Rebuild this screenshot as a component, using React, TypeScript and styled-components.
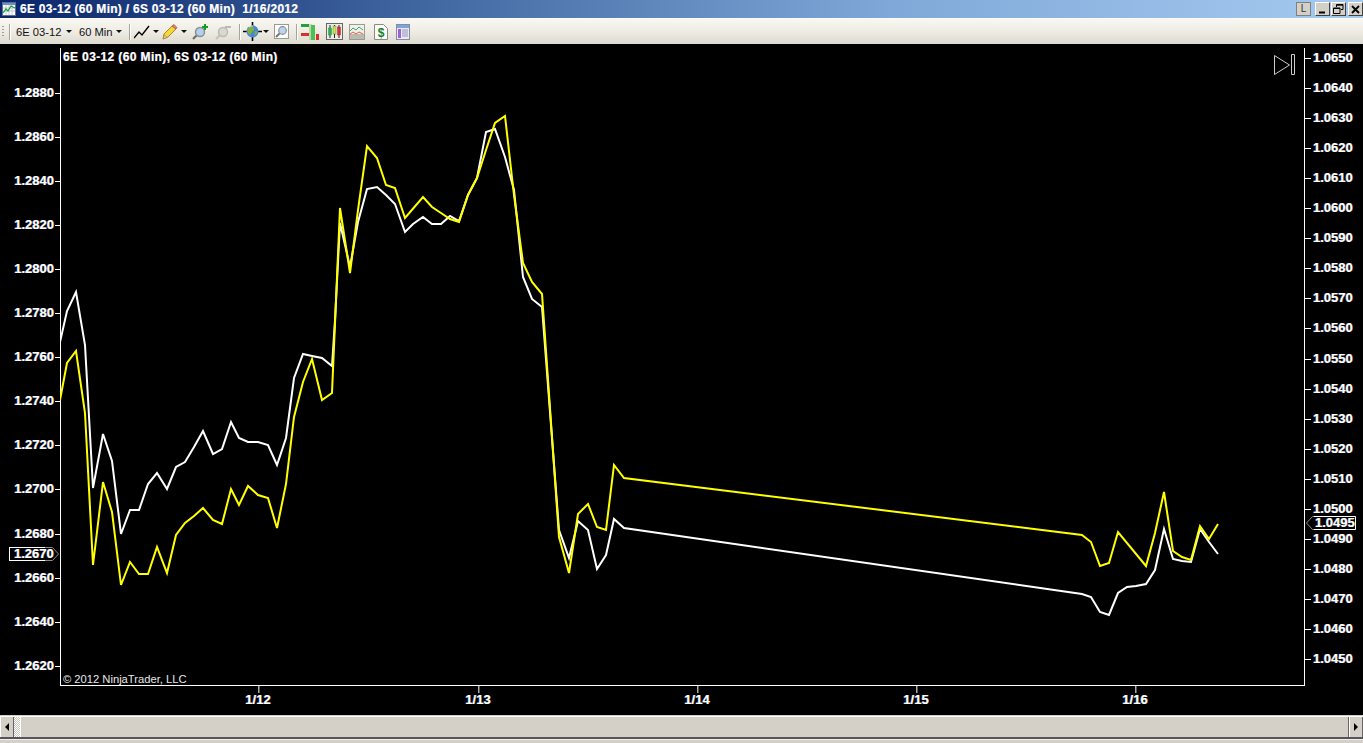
import React from 'react';
import styled, { createGlobalStyle } from 'styled-components';

const Global = createGlobalStyle`
  html, body { margin: 0; padding: 0; height: 100%; background: #d4d0c8; overflow: hidden; }
  #root { height: 100%; }
`;

const Win = styled.div`
  width: 1363px; height: 743px; display: flex; flex-direction: column;
  background: #d4d0c8; font-family: "Liberation Sans", Arial, sans-serif;
`;
const TitleBar = styled.div`
  height: 18px; flex: none; display: flex; align-items: center; gap: 4px; padding-left: 2px;
  background: linear-gradient(90deg, #0a246a 0%, #3f659f 30%, #7fa8d8 65%, #a6caf0 100%);
`;
const TitleText = styled.span`
  color: #fff; font-size: 12px; font-weight: 700; white-space: pre; letter-spacing: .28px;
  text-shadow: -.4px 0 rgba(120,180,255,.5), .4px 0 rgba(255,190,120,.4);
`;
const WinButtons = styled.div`
  margin-left: auto; display: flex; align-items: center; height: 100%; padding-top: 0;
`;
const WinBtn = styled.div<{ $gap?: number; $flat?: boolean }>`
  width: 15px; height: 14px; margin-left: ${p => p.$gap ?? 1}px; box-sizing: border-box;
  background: #d4d0c8; display: flex; align-items: center; justify-content: center;
  border: 1px solid; border-color: ${p => p.$flat ? '#808080' : '#fff #404040 #404040 #fff'};
  color: #333; line-height: 1;
`;
const LockLetter = styled.span`
  font-size: 10px; font-weight: 400;
`;
const Toolbar = styled.div`
  height: 26px; flex: none; display: flex; align-items: center; box-sizing: border-box;
  background: linear-gradient(180deg, #f8f7f2 0%, #efede5 45%, #dedbd0 100%);
  border-top: 1px solid #fbfaf6; color: #111; font-size: 11.2px;
`;
const Grip = styled.div`
  width: 2px; height: 12px; margin: 0 5px 0 2px; flex: none;
  background: repeating-linear-gradient(180deg, #a09d92 0 1px, transparent 1px 3px);
`;
const Sep = styled.div<{ $l: number }>`
  width: 1px; height: 16px; flex: none; background: #a8a598; box-shadow: 1px 0 #fff;
  margin-left: ${p => p.$l}px;
`;
const Combo = styled.span<{ $l: number; $w: number }>`
  margin-left: ${p => p.$l}px; width: ${p => p.$w}px; flex: none; white-space: nowrap;
`;
const Caret = styled.i<{ $l: number }>`
  width: 0; height: 0; flex: none; border: 3px solid transparent; border-top: 3px solid #111; border-bottom: 0;
  margin-left: ${p => p.$l}px;
`;
const Ico = styled.svg<{ $l?: number }>`
  flex: none; margin-left: ${p => p.$l ?? 0}px; display: block;
`;
const Chart = styled.div`
  flex: none; height: 671px; background: #000; display: grid; color: #fff;
  grid-template-columns: 60px 1245px 58px; grid-template-rows: 4px 638px 29px;
`;
const Axis = styled.div<{ $col: number }>`
  position: relative; grid-row: 2; grid-column: ${p => p.$col};
`;
const PriceLabel = styled.span<{ $side: 'l' | 'r' }>`
  position: absolute; height: 14px; line-height: 14px; margin-top: -7px; font-size: 13px; font-weight: 700;
  color: #fff; white-space: nowrap;
  text-shadow: -.5px 0 rgba(90,160,255,.7), .5px 0 rgba(255,160,70,.6);
  ${p => p.$side === 'l' ? 'right: 6px;' : 'left: 8px;'}
  &::after {
    content: ''; position: absolute; top: 7px; width: 5px; height: 1px; background: #fff;
    ${p => p.$side === 'l' ? 'right: -6px;' : 'left: -8px; width: 6px;'}
  }
`;
const Marker = styled.svg<{ $side: 'l' | 'r' }>`
  position: absolute; ${p => p.$side === 'l' ? 'left: 9px;' : 'left: 0;'}
`;
const MarkerText = styled.span`
  position: absolute; font-size: 13px; font-weight: 700; line-height: 14px; height: 14px; color: #fff;
  text-shadow: -.5px 0 rgba(90,160,255,.7), .5px 0 rgba(255,160,70,.6);
`;
const Plot = styled.div`
  position: relative; grid-row: 2; grid-column: 2; box-sizing: border-box;
  border-left: 1px solid #fff; border-right: 1px solid #fff; border-bottom: 1px solid #fff;
`;
const PlotSvg = styled.svg`
  position: absolute; left: -1px; top: 0; display: block; overflow: hidden;
`;
const Heading = styled.div`
  position: absolute; left: 2px; top: 2px; font-size: 12px; font-weight: 700; letter-spacing: .37px; white-space: nowrap;
  text-shadow: -.4px 0 rgba(90,160,255,.6), .4px 0 rgba(255,160,70,.5);
`;
const Copyright = styled.div`
  position: absolute; left: 2px; bottom: 0; font-size: 11.2px; line-height: 12px; color: #e8e8e8; white-space: nowrap;
`;
const DateAxis = styled.div`
  grid-column: 2; grid-row: 3; position: relative;
`;
const DateLabel = styled.span`
  position: absolute; top: 7px; transform: translateX(-50%); font-size: 13px; font-weight: 700; line-height: 14px;
  text-shadow: -.5px 0 rgba(90,160,255,.7), .5px 0 rgba(255,160,70,.6);
  &::before { content: ''; position: absolute; left: 50%; top: -7px; width: 1px; height: 7px; background: #fff; }
`;
const ScrollBar = styled.div`
  flex: none; display: flex; background: #d4d0c8; border-top: 1px solid #fff;
  border-bottom: 2px solid #555; height: 20px; margin-top: 1px;
`;
const ScrollBtn = styled.div`
  width: 14px; flex: none; display: flex; align-items: center; justify-content: center;
  box-shadow: inset -1px 0 #666, inset 1px 0 #fff;
`;
const Track = styled.div`
  width: 6px; flex: none;
  background: repeating-conic-gradient(#fff 0 25%, #c8c4bc 0 50%) 0 0 / 2px 2px;
`;
const Thumb = styled.div`
  flex: 1; box-shadow: inset 1px 0 #fff, inset -1px 0 #666;
`;
const Tri = styled.i<{ $dir: 'l' | 'r' }>`
  width: 0; height: 0; border: 4px solid transparent; border-left-width: ${p => p.$dir === 'r' ? 4 : 0}px;
  border-right-width: ${p => p.$dir === 'l' ? 4 : 0}px;
  ${p => p.$dir === 'r' ? 'border-left-color:#000;' : 'border-right-color:#000;'}
`;
const Footer = styled.div`
  flex: 1; background: #d4d0c8; border-top: 1px solid #eee;
`;

const white: number[][] = [[60,342],[67,311],[76,292],[85,345],[93,488],[103,434],[112,461],[121,534],[130,510],[139,510],[148,484],[157,473],[167,489],[176,467],[185,462],[194,447],[203,431],[213,454],[222,449],[231,422],[239,438],[248,442],[258,442],[268,445],[277,465],[286,438],[294,378],[303,354],[312,356],[322,358],[332,366],[335,320],[340,223],[350,267],[358,222],[367,189],[377,187],[386,195],[395,204],[405,232],[413,224],[423,217],[432,224],[441,224],[450,216],[459,221],[468,195],[477,178],[486,132],[495,129],[505,157],[514,190],[523,277],[532,299],[542,307],[559,530],[569,558],[578,521],[588,530],[597,569],[606,555],[614,519],[624,528],[1082,594],[1091,597],[1100,612],[1109,615],[1118,593],[1127,587],[1136,586],[1146,584],[1155,570],[1164,529],[1173,559],[1182,561],[1191,562],[1200,529],[1209,542],[1218,554]];
const yellow: number[][] = [[60,400],[67,363],[76,351],[85,413],[93,565],[103,482],[112,512],[121,585],[130,562],[139,574],[148,574],[157,547],[167,573],[176,535],[185,523],[194,516],[203,508],[213,520],[222,524],[231,489],[239,505],[248,486],[258,495],[268,498],[277,528],[286,484],[294,417],[303,382],[312,359],[322,400],[332,393],[340,208],[350,273],[358,210],[367,146],[377,158],[386,185],[395,188],[405,218],[423,197],[432,207],[441,213],[450,219],[459,222],[468,195],[477,178],[486,150],[495,123],[505,116],[514,195],[523,263],[532,282],[542,294],[559,537],[569,573],[578,514],[588,504],[597,527],[606,530],[614,465],[624,478],[1082,535],[1091,542],[1100,566],[1109,563],[1118,532],[1146,566],[1155,533],[1164,492],[1173,551],[1182,557],[1191,560],[1200,526],[1209,539],[1218,524]];
const pts = (a: number[][]) => a.map(p => p.join(',')).join(' ');

const leftPrices = Array.from({ length: 14 }, (_, i) => ({ t: (1.288 - i * 0.002).toFixed(4), y: 93 + i * 44.05 - 48 }));
const rightPrices = Array.from({ length: 21 }, (_, i) => ({ t: (1.065 - i * 0.001).toFixed(4), y: 58 + i * 30.05 - 48 }));
const dates = [['1/12', 198], ['1/13', 418], ['1/14', 637], ['1/15', 856], ['1/16', 1075]] as const;

const TitleIcon = () => (
  <Ico width="14" height="14" viewBox="0 0 14 14">
    <rect x=".5" y=".5" width="13" height="13" fill="#fff" stroke="#5a6f9a" />
    <rect x="1" y="1" width="12" height="2" fill="#6d8fc5" />
    <path d="M4 3v10M7 3v10M10 3v10M1 6h12M1 9h12" stroke="#c0c8d8" />
    <path d="M1 11l3-4 2 2 3-5 4 2" fill="none" stroke="#18a030" strokeWidth="1.2" />
  </Ico>
);

export default function App() {
  return (
    <Win>
      <Global />
      <TitleBar>
        <TitleIcon />
        <TitleText>6E 03-12 (60 Min) / 6S 03-12 (60 Min)  1/16/2012</TitleText>
        <WinButtons>
          <WinBtn $flat><LockLetter>L</LockLetter></WinBtn>
          <WinBtn $gap={4}>
            <svg width="9" height="9" viewBox="0 0 9 9"><path d="M1 7.5h6" stroke="#000" strokeWidth="2" /></svg>
          </WinBtn>
          <WinBtn $gap={1}>
            <svg width="11" height="10" viewBox="0 0 11 10"><path d="M3.5 3V.5h6.5v5H8M.5 4h6.5v5.500H.500z M.5 4.500h6.500M3.500 1.200h6.500" fill="none" stroke="#000" /></svg>
          </WinBtn>
          <WinBtn $gap={2}>
            <svg width="9" height="9" viewBox="0 0 9 9"><path d="M1 1l7 7M8 1L1 8" stroke="#000" strokeWidth="1.8" /></svg>
          </WinBtn>
        </WinButtons>
      </TitleBar>

      <Toolbar>
        <Grip />
        <Sep $l={0} />
        <Combo $l={6} $w={50}>6E 03-12</Combo>
        <Caret $l={0} />
        <Combo $l={7} $w={37}>60 Min</Combo>
        <Caret $l={0} />
        <Sep $l={7} />
        <Ico $l={4} width="16" height="14" viewBox="0 0 16 14">
          <path d="M0 13l5-6 3 3 7-9" fill="none" stroke="#000" strokeWidth="1.4" />
        </Ico>
        <Caret $l={3} />
        <Ico $l={3} width="16" height="16" viewBox="0 0 16 16">
          <path d="M1 15l1-5 8-8 4 3-8 8z" fill="#f4d73c" stroke="#a88a20" />
          <path d="M1 15l1.200-4 3 2.500z" fill="#e8c8a0" stroke="#887050" strokeWidth=".5" />
          <path d="M10 2l2-1.500 3 3-1 1.500z" fill="#e88a70" stroke="#a05040" strokeWidth=".7" />
        </Ico>
        <Caret $l={3} />
        <Ico $l={5} width="17" height="16" viewBox="0 0 17 16">
          <path d="M1 15l4-4" stroke="#6d6d6d" strokeWidth="2.200" />
          <circle cx="8" cy="8" r="4.500" fill="#b4cfee" stroke="#8a8f98" strokeWidth="1.500" />
          <path d="M13 0v6M10 3h6" stroke="#12a020" strokeWidth="2" />
        </Ico>
        <Ico $l={6} width="17" height="16" viewBox="0 0 17 16">
          <path d="M1 15l4-4" stroke="#c4c2bc" strokeWidth="2.200" />
          <circle cx="8" cy="8" r="4.500" fill="#dad8d2" stroke="#bcbab4" strokeWidth="1.500" />
          <path d="M10 3h6" stroke="#bcbab4" strokeWidth="2" />
        </Ico>
        <Sep $l={7} />
        <Ico $l={3} width="19" height="19" viewBox="0 0 19 19">
          <path d="M9.500 0v19M0 9.500h19" stroke="#000" strokeWidth="1.600" />
          <circle cx="9.500" cy="9.500" r="6" fill="#4a86d6" />
          <path d="M5 6c3-2 5-1 6 0s-1 3-2 4-1 4-3 2-2-4-1-6zM12 9c1 0 2 0 2.500 1-.5 2-2 3.500-3 3.500z" fill="#7fb23a" />
          <path d="M6 5c2-1 3-1 4-1" stroke="#dff0ff" fill="none" />
        </Ico>
        <Caret $l={1} />
        <Ico $l={5} width="15" height="15" viewBox="0 0 15 15">
          <rect x=".5" y=".5" width="14" height="14" fill="#fdfdfb" stroke="#9c9a94" />
          <circle cx="8.500" cy="6.500" r="3.800" fill="#bcd3ee" stroke="#8a9098" strokeWidth="1.200" />
          <path d="M2 13l3.500-3.500" stroke="#707070" strokeWidth="1.800" />
        </Ico>
        <Sep $l={7} />
        <Ico $l={4} width="18" height="17" viewBox="0 0 18 17">
          <path d="M0 1h8v3H0z" fill="#25a03c" /><path d="M0 10h8v3H0z" fill="#d8302c" />
          <path d="M8 1h3v3H8zM8 10h2v3H8z" fill="#d6d2c0" />
          <rect x="10" y="2" width="4" height="15" fill="#4cc050" />
          <rect x="8" y="4" width="2" height="13" fill="#b8d8b0" />
          <rect x="15" y="11" width="3" height="6" fill="#d8302c" />
        </Ico>
        <Ico $l={7} width="17" height="17" viewBox="0 0 17 17">
          <rect x=".5" y=".5" width="16" height="16" fill="#eeece4" stroke="#666" />
          <path d="M4 2v13M8.500 2v13M13 2v13" stroke="#222" />
          <rect x="2.500" y="5" width="3" height="7" fill="#30b040" stroke="#185" strokeWidth=".4" />
          <rect x="7" y="3" width="3" height="8" fill="#d8e050" stroke="#185" strokeWidth=".4" />
          <rect x="11.500" y="4" width="3" height="8" fill="#d83030" stroke="#822" strokeWidth=".4" />
        </Ico>
        <Ico $l={6} width="16" height="16" viewBox="0 0 16 16">
          <rect x=".5" y=".5" width="15" height="15" fill="#f2f0ea" stroke="#9c9a94" />
          <rect x="1" y="10" width="14" height="5" fill="#bdbab0" />
          <path d="M1 7l3-3 3 2 3-3 4 3" fill="none" stroke="#38a868" />
          <path d="M1 10l3-2 3 2 3-2 4 2" fill="none" stroke="#d86050" />
        </Ico>
        <Ico $l={9} width="14" height="16" viewBox="0 0 14 16">
          <path d="M.5.5h9l4 4v11H.500z" fill="#fcfcf8" stroke="#8c8a84" />
          <text x="7" y="13" textAnchor="middle" fontSize="12" fontWeight="700" fontFamily="Liberation Sans" fill="#138030">$</text>
        </Ico>
        <Ico $l={8} width="14" height="16" viewBox="0 0 14 16">
          <rect x=".5" y=".5" width="13" height="15" fill="#e8e8f6" stroke="#8a88a8" />
          <rect x="1" y="1" width="12" height="3" fill="#7aa6d8" />
          <rect x="2" y="5" width="3" height="9" fill="#a060d8" />
          <path d="M6 6h6M6 8h6M6 10h6M6 12h6" stroke="#9898b0" />
        </Ico>
      </Toolbar>

      <Chart>
        <Axis $col={1}>
          {leftPrices.map(p => (
            <PriceLabel key={p.t} $side="l" style={{ top: p.y }}>{p.t}</PriceLabel>
          ))}
          <Marker $side="l" width="51" height="16" style={{ top: 498 }} viewBox="0 0 51 16">
            <path d="M1 1.500h35.500M.5 1v14M1 14.500h35.500" stroke="#fff" fill="none" />
            <path d="M36 1.500h7.500l6 6.500-6 6.500H36" stroke="#888" fill="none" />
          </Marker>
          <MarkerText style={{ left: 14, top: 499 }}>1.2670</MarkerText>
        </Axis>
        <Plot>
          <PlotSvg width="1245" height="638" viewBox="60 48 1245 638">
            <polyline points={pts(white)} fill="none" stroke="#fff" strokeWidth="2" />
            <polyline points={pts(yellow)} fill="none" stroke="#ffff00" strokeWidth="2" />
            <path d="M1274.500 55.500v19l15-9.500z M1291.500 54.500h3v20h-3z" fill="none" stroke="#ccc" />
          </PlotSvg>
          <Heading>6E 03-12 (60 Min), 6S 03-12 (60 Min)</Heading>
          <Copyright>© 2012 NinjaTrader, LLC</Copyright>
        </Plot>
        <Axis $col={3}>
          {rightPrices.map(p => (
            <PriceLabel key={p.t} $side="r" style={{ top: p.y }}>{p.t}</PriceLabel>
          ))}
          <Marker $side="r" width="52" height="16" style={{ top: 467 }} viewBox="0 0 52 16">
            <path d="M9 1.500h41.500v13H9" stroke="#fff" fill="none" />
            <path d="M9 1.500H7.500l-6 6.500 6 6.500H9" stroke="#888" fill="none" />
          </Marker>
          <MarkerText style={{ left: 10, top: 468 }}>1.0495</MarkerText>
        </Axis>
        <DateAxis>
          {dates.map(([t, x]) => <DateLabel key={t} style={{ left: x }}>{t}</DateLabel>)}
        </DateAxis>
      </Chart>

      <ScrollBar>
        <ScrollBtn><Tri $dir="l" /></ScrollBtn>
        <Track />
        <Thumb />
        <ScrollBtn><Tri $dir="r" /></ScrollBtn>
      </ScrollBar>
      <Footer />
    </Win>
  );
}
